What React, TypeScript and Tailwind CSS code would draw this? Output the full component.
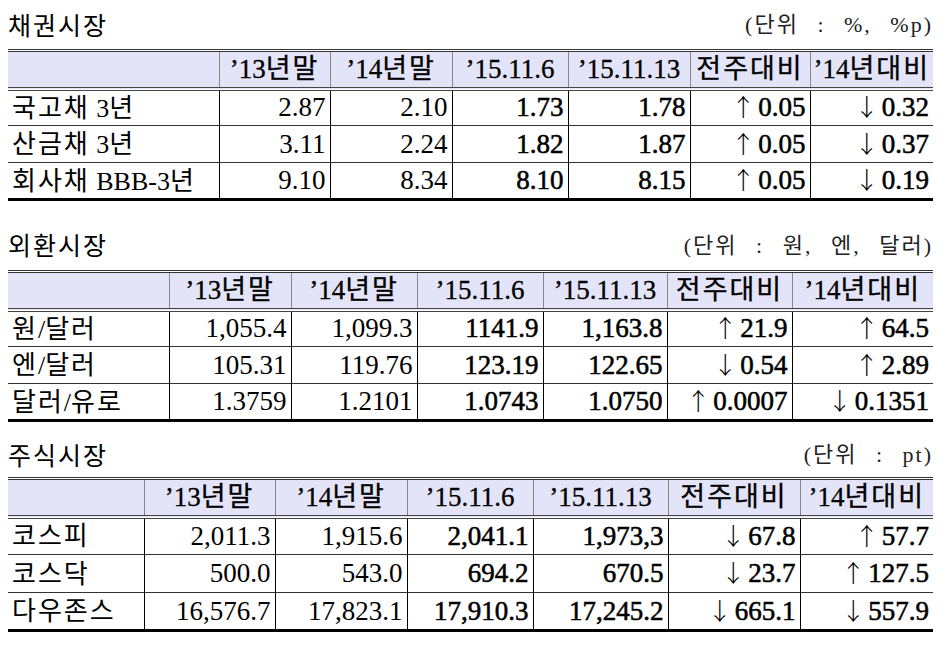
import { Fragment } from "react";

type Section = {
  title: string;
  unit: string;
  widths: number[];
  rows: string[][];
  boxClass: string;
  rowClass: string;
};

const HEAD = ["’13년말", "’14년말", "’15.11.6", "’15.11.13", "전주대비", "’14년대비"];

const SECTIONS: Section[] = [
  {
    title: "채권시장",
    unit: "(단위 : %, %p)",
    widths: [211, 111, 122, 116, 122, 120, 123],
    boxClass: "h-[49px]",
    rowClass: "h-[37px]",
    rows: [
      ["국고채 3년", "2.87", "2.10", "1.73", "1.78", "↑ 0.05", "↓ 0.32"],
      ["산금채 3년", "3.11", "2.24", "1.82", "1.87", "↑ 0.05", "↓ 0.37"],
      ["회사채 BBB-3년", "9.10", "8.34", "8.10", "8.15", "↑ 0.05", "↓ 0.19"],
    ],
  },
  {
    title: "외환시장",
    unit: "(단위 : 원, 엔, 달러)",
    widths: [161, 122, 126, 126, 124, 125, 141],
    boxClass: "mt-[19px] h-[50px]",
    rowClass: "h-[37px]",
    rows: [
      ["원/달러", "1,055.4", "1,099.3", "1141.9", "1,163.8", "↑ 21.9", "↑ 64.5"],
      ["엔/달러", "105.31", "119.76", "123.19", "122.65", "↓ 0.54", "↑ 2.89"],
      ["달러/유로", "1.3759", "1.2101", "1.0743", "1.0750", "↑ 0.0007", "↓ 0.1351"],
    ],
  },
  {
    title: "주식시장",
    unit: "(단위 : pt)",
    widths: [136, 131, 132, 126, 135, 132, 133],
    boxClass: "mt-[10px] h-[45px]",
    rowClass: "h-[38px]",
    rows: [
      ["코스피", "2,011.3", "1,915.6", "2,041.1", "1,973,3", "↓ 67.8", "↑ 57.7"],
      ["코스닥", "500.0", "543.0", "694.2", "670.5", "↓ 23.7", "↑ 127.5"],
      ["다우존스", "16,576.7", "17,823.1", "17,910.3", "17,245.2", "↓ 665.1", "↓ 557.9"],
    ],
  },
];

// 한글 구간에만 자간, 화살표는 CJK 글꼴로
function Ko({ text }: { text: string }) {
  const parts = text.split(/([\uAC00-\uD7A3]+|[↑↓] ?)/);
  return (
    <>
      {parts.map((p, i) => {
        if (/[\uAC00-\uD7A3]/.test(p))
          return (
            <span key={i} className="tracking-[2px]">
              {p}
            </span>
          );
        if (/[↑↓]/.test(p))
          return (
            <span
              key={i}
              className="font-['Noto_Sans_CJK_KR',sans-serif] font-light text-[24px] mr-[3px] [-webkit-text-stroke:0px]"
            >
              {p.trim()}
            </span>
          );
        return <Fragment key={i}>{p}</Fragment>;
      })}
    </>
  );
}

function MarketTable({ s }: { s: Section }) {
  return (
    <section>
      <div className={`flex items-center justify-between ${s.boxClass}`}>
        <h2 className="text-[25px] tracking-[2px] font-['Noto_Sans_CJK_KR',sans-serif] text-black">
          {s.title}
        </h2>
        <span className="text-[22px] tracking-[2px] [word-spacing:11px] text-[#222] font-['Liberation_Serif','Noto_Sans_CJK_KR',serif]">
          {s.unit}
        </span>
      </div>
      <table className="w-[925px] table-fixed border-collapse text-[27px] leading-none text-black font-['Liberation_Serif','Noto_Sans_CJK_KR',serif]">
        <colgroup>
          {s.widths.map((w, i) => (
            <col key={i} style={{ width: w }} />
          ))}
        </colgroup>
        <thead>
          <tr className="h-[38px] bg-[#e3e4f8] border-t-[3px] border-t-[#333] border-b-[4px] border-double border-b-[#444]">
            <th className="border-r border-r-[#888]" />
            {HEAD.map((h, i) => (
              <th
                key={h}
                className={`font-normal text-center [-webkit-text-stroke:0.3px_black] ${i < HEAD.length - 1 ? "border-r border-r-[#888]" : ""}`}
              >
                <Ko text={h} />
              </th>
            ))}
          </tr>
        </thead>
        <tbody>
          {s.rows.map((r, ri) => (
            <tr
              key={ri}
              className={`${s.rowClass} ${ri < s.rows.length - 1 ? "border-b border-b-[#333]" : "border-b-[3px] border-b-black"}`}
            >
              {r.map((c, ci) => (
                <td
                  key={ci}
                  className={`whitespace-nowrap ${ci === 0 ? "text-left pl-1 pt-[2px] text-[26px]" : "text-right pr-1"} ${ci >= 3 ? "[-webkit-text-stroke:0.55px_black]" : ""} ${ci < r.length - 1 ? "border-r border-r-black" : ""}`}
                >
                  <Ko text={c} />
                </td>
              ))}
            </tr>
          ))}
        </tbody>
      </table>
    </section>
  );
}

export default function App() {
  return (
    <div className="w-[945px] h-[645px] bg-white pl-2 pr-3 overflow-hidden">
      {SECTIONS.map((s) => (
        <MarketTable key={s.title} s={s} />
      ))}
    </div>
  );
}
